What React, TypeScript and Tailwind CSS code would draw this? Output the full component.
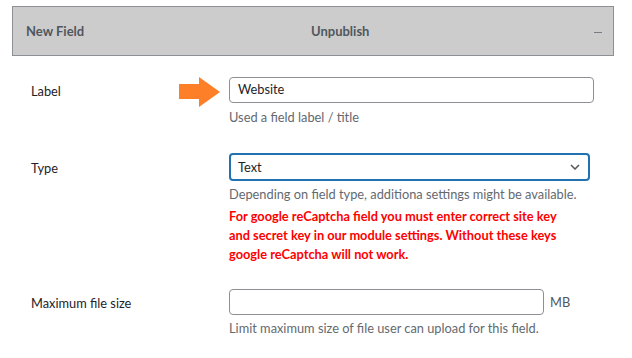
export default function App() {
  return (
    <div className="w-[632px] h-[358px] bg-white overflow-hidden font-['Lato',sans-serif] text-[12.8px] text-[#1d2327]">
      <div className="ml-[12px] mt-[6px] w-[602px] h-[50px] bg-[#cccccc] border border-[#8c8f94] flex items-center pl-[13px] pr-[10px] pt-[2px] text-[13px] text-[#50575e] font-bold">
        <span className="w-[285px]">New Field</span>
        <span className="flex-1">Unpublish</span>
        <span className="block w-[8px] h-px bg-[#787c82] mr-[1px]"></span>
      </div>

      <div className="flex mt-[21px]">
        <div className="w-[229px] pl-[31px] pt-[5px] flex justify-between pr-[9px]">
          <span>Label</span>
          <svg width="41" height="30" viewBox="0 0 41 30" className="mt-[-5px]">
            <polygon points="0,7 20,7 20,0 41,15 20,30 20,22 0,22" fill="#fd7f28" />
          </svg>
        </div>
        <div>
          <div className="w-[365px] h-[26px] border border-[#8c8f94] rounded-[4px] flex items-center px-[8px]">Website</div>
          <p className="mt-[5px] text-[#646970]">Used a field label / title</p>
        </div>
      </div>

      <div className="flex mt-[26px]">
        <div className="w-[229px] pl-[31px] pt-[6px]">Type</div>
        <div className="w-[380px]">
          <div className="w-[361px] h-[28px] border-2 border-[#2271b1] rounded-[4px] flex items-center justify-between pl-[7px] pr-[8px]">
            <span>Text</span>
            <svg width="10" height="6" viewBox="0 0 10 6" fill="none" stroke="#50575e" strokeWidth="1.5">
              <path d="M1 1l4 4 4-4" />
            </svg>
          </div>
          <p className="mt-[4px] text-[#646970] leading-[19px]">Depending on field type, additiona settings might be available.</p>
          <p className="mt-[3px] text-[#ff0000] font-bold leading-[19px] whitespace-nowrap">
            For google reCaptcha field you must enter correct site key
            <br />
            and secret key in our module settings. Without these keys
            <br />
            google reCaptcha will not work.
          </p>
        </div>
      </div>

      <div className="flex mt-[25px]">
        <div className="w-[229px] pl-[31px] pt-[5px]">Maximum file size</div>
        <div>
          <div className="flex items-center">
            <div className="w-[315px] h-[26px] border border-[#8c8f94] rounded-[4px]"></div>
            <span className="ml-[6px] text-[#50575e]">MB</span>
          </div>
          <p className="mt-[4px] text-[#646970]">Limit maximum size of file user can upload for this field.</p>
        </div>
      </div>
    </div>
  );
}
